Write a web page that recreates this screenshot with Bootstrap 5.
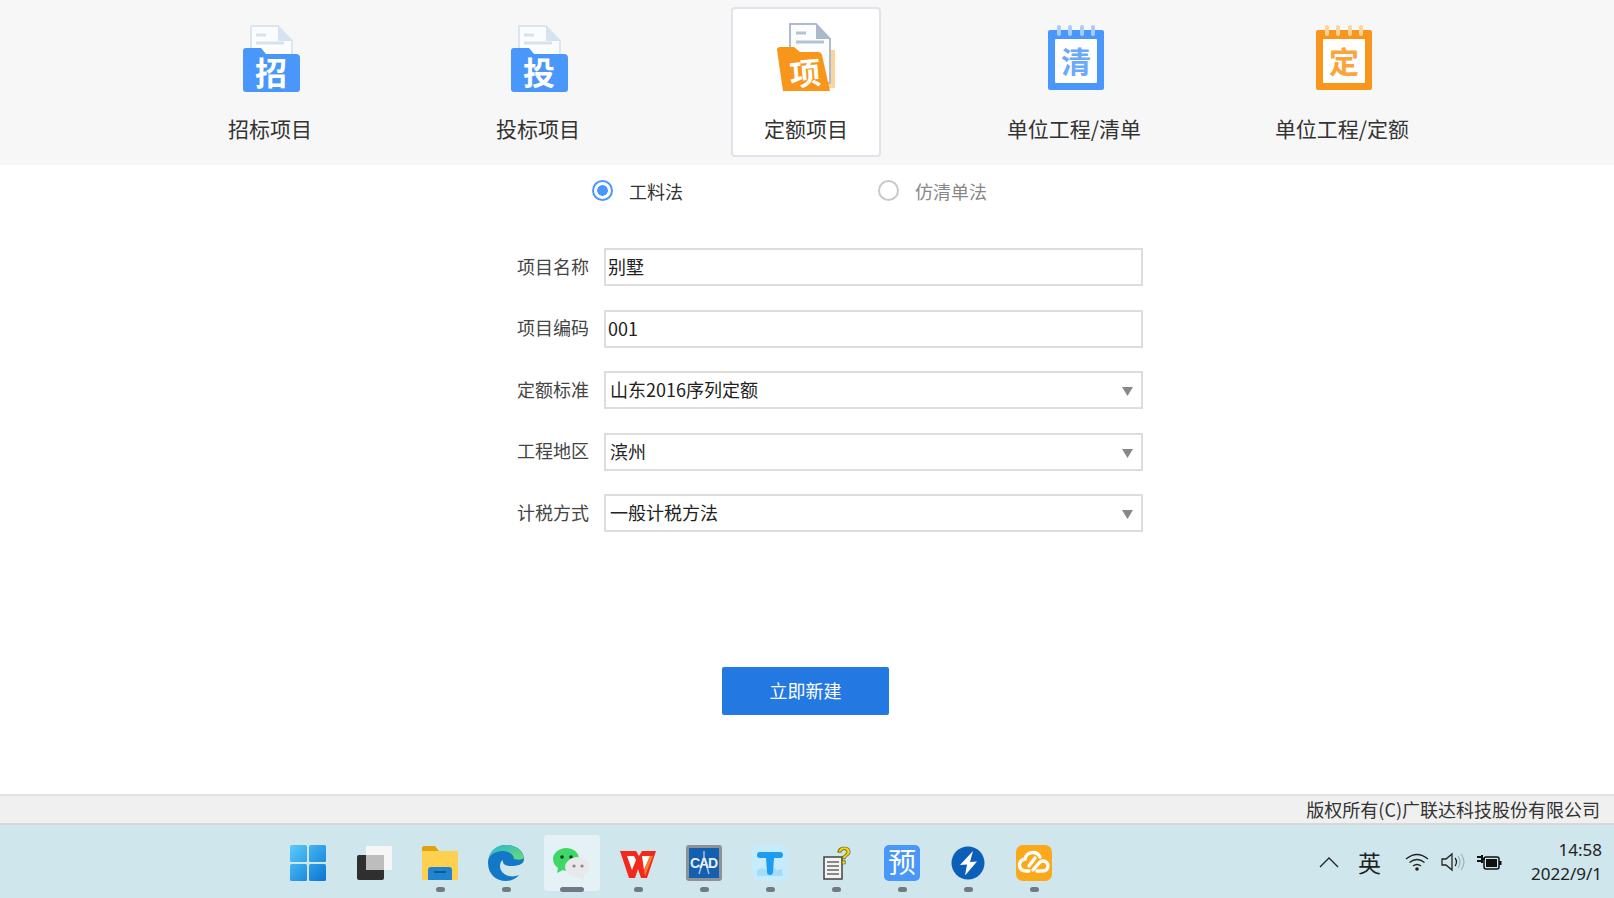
<!DOCTYPE html>
<html lang="zh-CN">
<head>
<meta charset="utf-8">
<title>新建项目</title>
<link rel="stylesheet" href="https://cdn.jsdelivr.net/npm/bootstrap@5.3.0/dist/css/bootstrap.min.css">
<style>
html,body{height:100%;}
body{width:1614px;height:898px;overflow:hidden;font-family:"Noto Sans CJK SC","Liberation Sans",sans-serif;color:#333;background:#fff;}
.top-strip{height:165px;background:#f7f7f7;padding-top:7px;padding-left:136px;}
.tab-slot{width:268px;height:150px;}
.tab-item{width:150px;height:150px;border:2px solid transparent;border-radius:4px;padding-top:14px;font-size:21px;line-height:28px;color:#333;text-decoration:none;}
.tab-item.is-on{background:#fff;border-color:#dfe4ea;}
.tab-icon{height:72px;display:block;margin-bottom:19px;overflow:visible;}
.main-area{height:629px;}
.method-row{height:52px;padding-left:592px;font-size:18px;line-height:26px;}
.method-choice{width:286px;margin:0;padding:0;}
.form-check-input.method-radio{width:21px;height:21px;margin:-1px 16px 0 0;float:none;border:2px solid #c9c9c9;background-color:#fff;background-image:none;flex:none;}
.form-check-input.method-radio:checked{border-color:#4a97fb;background-color:#fff;background-image:radial-gradient(circle,#4a97fb 0 5px,transparent 5.6px);}
.method-off{color:#888;}
.form-area{width:627px;margin-left:516px;padding-top:31px;}
.field-row{height:38px;margin-bottom:23.6px;}
.field-label{width:88px;padding-right:15px;margin:-2px 0 0;font-size:18px;text-align:right;color:#444;flex:none;}
.field-box{height:38px;min-height:38px;width:539px;border:2px solid #ddd;border-radius:0;font-size:18px;line-height:28px;color:#222;padding:0 2px 2px;box-shadow:none;}
select.field-box{padding:0 30px 2px 4px;background-image:url("data:image/svg+xml,%3Csvg xmlns='http://www.w3.org/2000/svg' width='11' height='9'%3E%3Cpath d='M0 0h11L5.500 9z' fill='%23888'/%3E%3C/svg%3E");background-size:11px 9px;background-position:right 8px top 14px;}
.submit-wrap{padding-top:111px;padding-left:722px;}
.btn.make-btn{width:167px;height:48px;background:#2378e1;border:0;border-radius:2px;font-size:18px;color:#fff;padding:0;}
.copy-strip{height:31px;background:#f0f0f0;border-top:2px solid #e2e2e2;border-bottom:2px solid #d8d8d8;padding-right:14px;font-size:18px;line-height:26px;color:#333;}
.task-strip{height:73px;background:#cfe6ec;padding-left:275px;}
.task-cell{width:66px;height:73px;position:relative;}
.task-cell svg{width:38px;height:38px;margin-top:19px;overflow:visible;}
.task-cell.is-open::before{content:"";position:absolute;left:5px;right:5px;top:10px;height:56px;background:#e4f1f6;border-radius:4px;}
.task-cell.is-open svg{position:relative;}
.task-dot{position:absolute;left:50%;top:62px;width:9px;height:5px;margin-left:-4.5px;border-radius:3px;background:#6f7b80;}
.task-cell.is-open .task-dot{width:24px;margin-left:-12px;}
.tray-area{margin-left:auto;padding-right:12px;color:#222;}
.tray-zh{font-size:23px;line-height:30px;margin:0 24px 0 19px;}
.tray-ico{display:block;}
.tray-gap{margin-left:11px;}
.tray-clock{font-size:17px;line-height:24px;text-align:right;margin-left:28px;font-family:"Noto Sans","Liberation Sans",sans-serif;}
.icon-text{font-family:"Noto Sans CJK SC",sans-serif;font-weight:700;text-anchor:middle;}
.cad-text{font-family:"Liberation Sans",sans-serif;font-weight:700;text-anchor:middle;}
</style>
</head>
<body>
<div class="top-strip d-flex">
  <div class="tab-slot d-flex justify-content-center"><a class="tab-item d-flex flex-column align-items-center" href="#">
    <svg class="tab-icon" width="62" height="72" viewBox="0 0 62 72"><g transform="translate(0 -1)"><path d="M12 4h27l14 15v26H12z" fill="#fbfcfe" stroke="#dbe6f2" stroke-width="2"/><path d="M39 4v15h14z" fill="#d5e2f1"/><path d="M17 13h10M17 21h28" stroke="#d9e1ea" stroke-width="3"/><path d="M4 29q0-3 3-3h15l5 6h30q4 0 4 4v31q0 3-3 3H7q-3 0-3-3z" fill="#4a97fb"/><text class="icon-text" x="32" y="63" font-size="32" fill="#fff">招</text></g></svg>招标项目</a></div>
  <div class="tab-slot d-flex justify-content-center"><a class="tab-item d-flex flex-column align-items-center" href="#">
    <svg class="tab-icon" width="62" height="72" viewBox="0 0 62 72"><g transform="translate(0 -1)"><path d="M12 4h27l14 15v26H12z" fill="#fbfcfe" stroke="#dbe6f2" stroke-width="2"/><path d="M39 4v15h14z" fill="#d5e2f1"/><path d="M17 13h10M17 21h28" stroke="#d9e1ea" stroke-width="3"/><path d="M4 29q0-3 3-3h15l5 6h30q4 0 4 4v31q0 3-3 3H7q-3 0-3-3z" fill="#4a97fb"/><text class="icon-text" x="32" y="63" font-size="32" fill="#fff">投</text></g></svg>投标项目</a></div>
  <div class="tab-slot d-flex justify-content-center"><a class="tab-item is-on d-flex flex-column align-items-center" href="#">
    <svg class="tab-icon" width="62" height="72" viewBox="0 0 62 72"><g transform="translate(0 -1)"><rect x="46" y="28" width="14" height="38" rx="1" fill="#fcd49a"/><path d="M15 2h26l14 15v44H15z" fill="#fbfcfe" stroke="#aebccb" stroke-width="2"/><path d="M41 2v15h14z" fill="#a9b9ca"/><path d="M21 11h10M21 20h28" stroke="#b5c2cf" stroke-width="3"/><path d="M2 28q0-3 3-3h14l6 5h18q3 0 4 3l8 36H8z" fill="#f8961b"/><text class="icon-text" x="30" y="63" font-size="31" fill="#fff" transform="rotate(-5 30 50)">项</text></g></svg>定额项目</a></div>
  <div class="tab-slot d-flex justify-content-center"><a class="tab-item d-flex flex-column align-items-center" href="#">
    <svg class="tab-icon" width="62" height="72" viewBox="0 0 62 72"><g transform="translate(2 1)"><rect x="3" y="6" width="56" height="60" rx="2" fill="#4a97fb"/><rect x="10" y="15" width="42" height="44" rx="1" fill="#fff"/><path d="M14 3v7M25 3v7M37 3v7M48 3v7" stroke="#a9cdfa" stroke-width="4" stroke-linecap="round"/><text class="icon-text" x="31" y="49" font-size="30" fill="#6aa9fb">清</text></g></svg>单位工程/清单</a></div>
  <div class="tab-slot d-flex justify-content-center"><a class="tab-item d-flex flex-column align-items-center" href="#">
    <svg class="tab-icon" width="62" height="72" viewBox="0 0 62 72"><g transform="translate(2 1)"><rect x="3" y="6" width="56" height="60" rx="2" fill="#f8961b"/><rect x="10" y="15" width="42" height="44" rx="1" fill="#fff"/><path d="M14 3v7M25 3v7M37 3v7M48 3v7" stroke="#fbd39b" stroke-width="4" stroke-linecap="round"/><text class="icon-text" x="31" y="49" font-size="30" fill="#f9a53c">定</text></g></svg>单位工程/定额</a></div>
</div>

<div class="main-area">
  <div class="method-row d-flex align-items-center">
    <label class="method-choice form-check d-flex align-items-center"><input class="form-check-input method-radio" type="radio" name="m" checked>工料法</label>
    <label class="method-choice method-off form-check d-flex align-items-center"><input class="form-check-input method-radio" type="radio" name="m">仿清单法</label>
  </div>
  <form class="form-area">
    <div class="field-row d-flex align-items-center"><label class="field-label">项目名称</label><input class="form-control field-box" value="别墅"></div>
    <div class="field-row d-flex align-items-center"><label class="field-label">项目编码</label><input class="form-control field-box" value="001"></div>
    <div class="field-row d-flex align-items-center"><label class="field-label">定额标准</label><select class="form-select field-box"><option>山东2016序列定额</option></select></div>
    <div class="field-row d-flex align-items-center"><label class="field-label">工程地区</label><select class="form-select field-box"><option>滨州</option></select></div>
    <div class="field-row d-flex align-items-center"><label class="field-label">计税方式</label><select class="form-select field-box"><option>一般计税方法</option></select></div>
  </form>
  <div class="submit-wrap"><button class="btn make-btn" type="button">立即新建</button></div>
</div>

<div class="copy-strip text-end">版权所有(C)广联达科技股份有限公司</div>

<div class="task-strip d-flex">
  <div class="task-cell d-flex justify-content-center"><svg viewBox="0 0 38 38"><defs><linearGradient id="w1" gradientUnits="userSpaceOnUse" x1="0" y1="0" x2="38" y2="38"><stop offset="0" stop-color="#5ccdfc"/><stop offset="1" stop-color="#0673d2"/></linearGradient></defs><g fill="url(#w1)"><rect x="1" y="1" width="17" height="17" rx="1.5"/><rect x="20" y="1" width="17" height="17" rx="1.5"/><rect x="1" y="20" width="17" height="17" rx="1.5"/><rect x="20" y="20" width="17" height="17" rx="1.5"/></g></svg></div>
  <div class="task-cell d-flex justify-content-center"><svg viewBox="0 0 38 38"><rect x="2" y="11" width="27" height="25" rx="2" fill="#2f2f2f"/><rect x="11" y="2" width="26" height="24" rx="1" fill="#f6f6f6"/><rect x="11" y="11" width="18" height="15" fill="#bdbdbd"/></svg></div>
  <div class="task-cell d-flex justify-content-center"><svg viewBox="0 0 38 38"><path d="M1 4q0-2 2-2h11l4 5H1z" fill="#e0a30a"/><path d="M1 7h36v29H1z" fill="#fdd14f"/><path d="M7 36V26q0-3 3-3h18q3 0 3 3v10z" fill="#1f83d0"/><path d="M13 28h12" stroke="#0b4f86" stroke-width="1.5"/></svg><span class="task-dot"></span></div>
  <div class="task-cell d-flex justify-content-center"><svg viewBox="0 0 38 38"><defs><linearGradient id="e1" x1="0" y1="0" x2="1" y2="1"><stop offset="0" stop-color="#2ab5d8"/><stop offset="1" stop-color="#6fdc6a"/></linearGradient></defs><path d="M19 1C9 1 1 9 1 19c0 11 8 18 18 18 5 0 10-2 13-6-9 4-19-1-19-9 0-3 1-5 3-6-1 4 3 6 8 6 6 0 13-1 13-7C37 7 29 1 19 1z" fill="#1279c8"/><path d="M19 1C9 1 3 7 2 14c3-5 8-7 14-7 6 0 11 4 11 8 2 1 8 1 10-1C35 6 28 1 19 1z" fill="url(#e1)"/></svg><span class="task-dot"></span></div>
  <div class="task-cell is-open d-flex justify-content-center"><svg viewBox="0 0 38 38"><path d="M13 4C6 4 0 9 0 15c0 4 2 7 5 9l-1 5 6-3c1 0 2 1 3 1 7 0 13-5 13-12S20 4 13 4z" fill="#3fd868"/><circle cx="9" cy="13" r="1.800" fill="#0e3b1e"/><circle cx="18" cy="13" r="1.800" fill="#0e3b1e"/><path d="M25 13c-7 0-13 5-13 10s6 10 13 10l6 3-1-5c4-2 7-5 7-8 0-5-5-10-12-10z" fill="#e9e9e9"/><circle cx="21" cy="22" r="1.600" fill="#888"/><circle cx="29" cy="22" r="1.600" fill="#888"/></svg><span class="task-dot"></span></div>
  <div class="task-cell d-flex justify-content-center"><svg viewBox="0 0 38 38"><path d="M1 7h16l3 5 3-5h14L28 34h-6l-3-9-3 9h-6z" fill="#f2291b"/><path d="M8 12l5 14 4-10-2-4zM23 12l2 14 6-14z" fill="#fff"/><path d="M25 26l6-14h3l-8 20z" fill="#ff7a2a"/></svg><span class="task-dot"></span></div>
  <div class="task-cell d-flex justify-content-center"><svg viewBox="0 0 38 38"><rect x="1" y="1" width="36" height="36" rx="3" fill="#8d9296"/><rect x="4" y="4" width="30" height="30" fill="#155fb0"/><path d="M19 7v6M14 30l5-17 5 17" fill="none" stroke="#9fc3e6" stroke-width="1.500"/><text class="cad-text" x="19" y="24" font-size="14" fill="#e6eff8" textLength="28" lengthAdjust="spacing">CAD</text></svg><span class="task-dot"></span></div>
  <div class="task-cell d-flex justify-content-center"><svg viewBox="0 0 38 38"><rect x="1" y="1" width="36" height="36" rx="8" fill="#c6ecfc"/><path d="M6 32v-6l5-2 4 2 6-3 5 3 5-1 1 7z" fill="#a5dcf8"/><path d="M6 11q0-3 3-3h20q3 0 3 3t-3 3h-6l-1 14q-.2 3-3 3t-3-3l-1-14H9q-3 0-3-3z" fill="#1c9cf2"/></svg><span class="task-dot"></span></div>
  <div class="task-cell d-flex justify-content-center"><svg viewBox="0 0 38 38"><path d="M7 13h18v22H7z" fill="#f3f3f3" stroke="#444" stroke-width="1.500"/><path d="M10 18h12M10 22h12M10 26h12M10 30h12" stroke="#666" stroke-width="1.300"/><text class="cad-text" x="27" y="20" font-size="24" fill="#f8d612" stroke="#5c5a10" stroke-width=".7">?</text></svg><span class="task-dot"></span></div>
  <div class="task-cell d-flex justify-content-center"><svg viewBox="0 0 38 38"><rect x="1" y="1" width="36" height="36" rx="5" fill="#4a97fb"/><text class="icon-text" x="19" y="29" font-size="28" fill="#fff" style="font-weight:400">预</text></svg><span class="task-dot"></span></div>
  <div class="task-cell d-flex justify-content-center"><svg viewBox="0 0 38 38"><circle cx="19" cy="19" r="16.500" fill="#0b5fb8"/><path d="M24 7 11 21l7-.5-2 11 12-14-7 .5z" fill="#fff"/></svg><span class="task-dot"></span></div>
  <div class="task-cell d-flex justify-content-center"><svg viewBox="0 0 38 38"><rect x="1" y="1" width="36" height="36" rx="7" fill="#fba91a"/><path d="M14 27H11a6 6 0 0 1-1-12 8 8 0 0 1 15-2M18 26l7-8a5 5 0 1 1 3 9h-6M20 14l-6 8" fill="none" stroke="#fff" stroke-width="3.400" stroke-linecap="round"/></svg><span class="task-dot"></span></div>
  <div class="tray-area d-flex align-items-center">
    <svg class="tray-ico" width="20" height="12" viewBox="0 0 20 12"><path d="M1 11 10 2l9 9" fill="none" stroke="#222" stroke-width="1.300"/></svg>
    <span class="tray-zh">英</span>
    <svg class="tray-ico" width="24" height="20" viewBox="0 0 24 20"><path d="M1 7q11-9 22 0M4.500 10.500q7.500-6 15 0M8 14q4-3 8 0" fill="none" stroke="#222" stroke-width="1.300"/><circle cx="12" cy="17" r="1.800" fill="#222"/></svg>
    <svg class="tray-ico tray-gap" width="26" height="20" viewBox="0 0 26 20"><path d="M2 7h4l6-5v16l-6-5H2z" fill="none" stroke="#222" stroke-width="1.300"/><path d="M15 6q3 4 0 8" fill="none" stroke="#222" stroke-width="1.300"/><path d="M18 4q4 6 0 12M21 2q6 8 0 16" fill="none" stroke="#9fb0b6" stroke-width="1.200"/></svg>
    <svg class="tray-ico tray-gap" width="26" height="18" viewBox="0 0 26 18"><path d="M0 4h5M0 8h5M5 2v8M5 6h3" stroke="#111" stroke-width="2"/><rect x="7" y="4" width="15" height="12" rx="2" fill="none" stroke="#111" stroke-width="1.500"/><rect x="9" y="6" width="11" height="8" fill="#111"/><rect x="22" y="8" width="2.500" height="4" fill="#111"/></svg>
    <div class="tray-clock">14:58<br>2022/9/1</div>
  </div>
</div>
<script src="https://cdn.jsdelivr.net/npm/bootstrap@5.3.0/dist/js/bootstrap.bundle.min.js"></script>
</body>
</html>
